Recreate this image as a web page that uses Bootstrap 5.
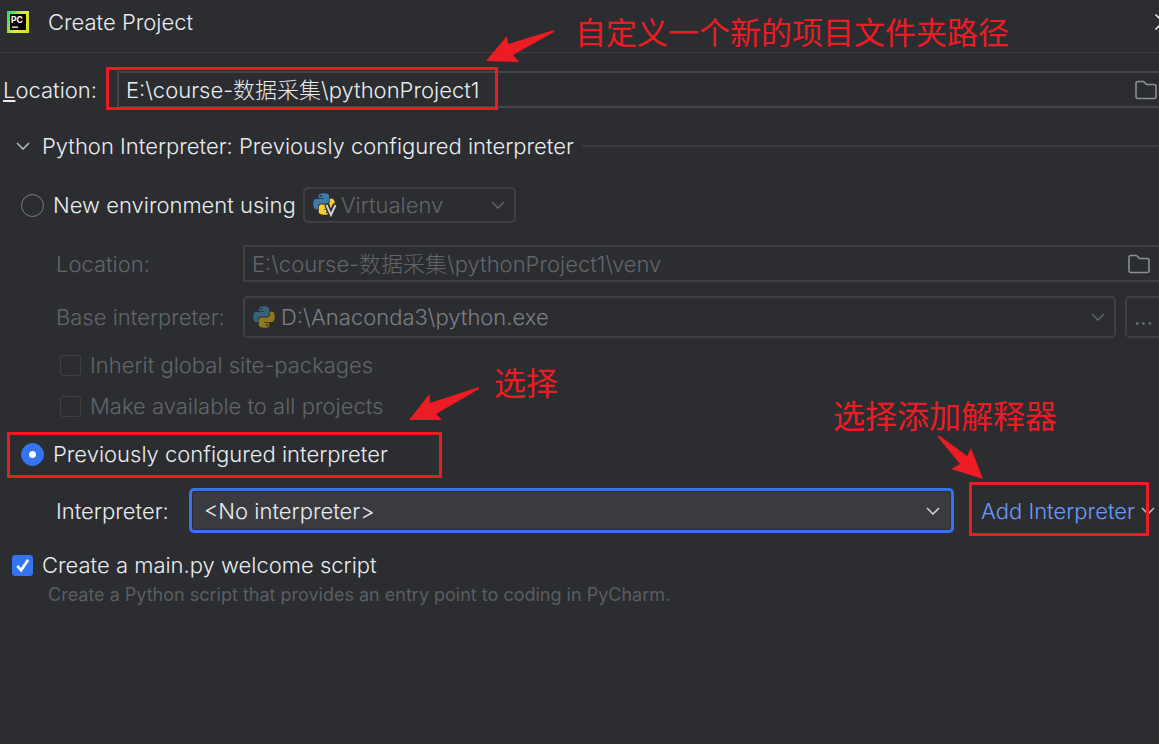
<!DOCTYPE html>
<html lang="en" data-bs-theme="dark">
<head>
<meta charset="utf-8">
<meta name="viewport" content="width=device-width, initial-scale=1">
<title>Create Project</title>
<link href="https://cdn.jsdelivr.net/npm/bootstrap@5.3.0/dist/css/bootstrap.min.css" rel="stylesheet">
<style>
  :root {
    --ui-bg: #2b2d30;
    --ui-text: #eaecf0;
    --ui-muted: #62656b;
    --ui-line: #43454a;
    --ui-blue: #3574f0;
    --note-red: #ed1c24;
  }
  body {
    background: var(--ui-bg);
    color: var(--ui-text);
    font-family: Inter, "Noto Sans CJK SC", sans-serif;
    font-size: 22px;
    font-weight: 300;
    line-height: 32px;
    overflow-x: hidden;
  }
  .title-bar { height: 53px; padding: 0 0 8px 7px; border-bottom: 1px solid #3c3e42; overflow: hidden; }
  .title-bar h1 { font-size: 22px; line-height: 32px; font-weight: 300; margin-left: 19px; color: var(--ui-text); }
  .close-btn { width: 16px; height: 16px; margin-right: -12px; line-height: 0; color: #fff; }
  .mnemonic { text-decoration: underline; text-decoration-thickness: 2px; text-underline-offset: 2px; text-decoration-skip-ink: none; }

  .form-control, .form-select {
    background-color: transparent;
    border: 2px solid var(--ui-line);
    color: var(--ui-text);
    font-size: 22px;
    font-weight: 300;
    line-height: 32px;
    padding: 0 7px;
  }
  .form-control { border-radius: 0; border-right: 0; padding-right: 48px; padding-bottom: 4px; }
  .form-control:disabled, .form-select:disabled { background-color: transparent; color: var(--ui-muted); opacity: 1; border-color: #3f4145; }
  .form-select {
    border-radius: 5px;
    background-image: url("data:image/svg+xml,%3Csvg xmlns='http://www.w3.org/2000/svg' viewBox='0 0 14 8'%3E%3Cpath d='M1 1l6 6 6-6' fill='none' stroke='%235f6268' stroke-width='1.6'/%3E%3C/svg%3E");
    background-size: 14px 8px;
    background-position: right 9px center;
  }
  .form-select.with-icon { padding-left: 36px; }
  .select-icon { position: absolute; left: 10px; top: 50%; transform: translateY(-50%); }
  .browse-btn { position: absolute; top: 50%; transform: translateY(-50%); line-height: 0; color: #8b8e94; }
  .h-field { height: 37px; }
  .h-combo { height: 42px; }
  .h-small { height: 36px; }
  .dim { color: var(--ui-muted); }

  .form-select.active-combo {
    height: 45px;
    background-color: #393b40;
    background-image: url("data:image/svg+xml,%3Csvg xmlns='http://www.w3.org/2000/svg' viewBox='0 0 14 8'%3E%3Cpath d='M1 1l6 6 6-6' fill='none' stroke='%23ced0d6' stroke-width='1.6'/%3E%3C/svg%3E");
    background-position: right 11px center;
    border: 3px solid var(--ui-blue);
    box-shadow: inset 0 0 0 1px var(--ui-bg);
    padding-left: 12px;
  }

  .form-check-input { margin: 0; background-color: transparent; border: 1px solid #7b7f86; flex: none; }
  .form-check-input[type=radio] { width: 23px; height: 23px; }
  .form-check-input[type=checkbox] { width: 21px; height: 21px; border-radius: 3px; }
  .form-check-input:checked { background-color: var(--ui-blue); border-color: var(--ui-blue); }
  .form-check-input[type=radio]:checked { background-image: radial-gradient(circle, #fff 3px, transparent 4px); }
  .form-check-input[type=checkbox]:checked { background-size: 100%; background-image: url("data:image/svg+xml,%3Csvg xmlns='http://www.w3.org/2000/svg' viewBox='0 0 20 20'%3E%3Cpath d='M4.500 10.500L8.500 15 16 4' fill='none' stroke='%23fff' stroke-width='2.8'/%3E%3C/svg%3E"); }
  .form-check-input:disabled { border-color: var(--ui-line); opacity: .8; }
  .form-check-input:disabled ~ label { opacity: 1; }

  .col-inner { width: 187px; flex: none; }
  .col-interp { width: 133px; flex: none; }
  .more-btn { width: 43px; margin-right: -9px; border: 2px solid #3f4145; border-radius: 5px; color: var(--ui-muted); padding: 0 7px; text-align: left; font-size: 22px; line-height: 32px; }
  .add-area { width: 205px; padding-left: 27px; flex: none; }
  .add-link { color: #6b9bfa; text-decoration: none; }
  .hint { font-size: 18px; line-height: 24px; font-weight: 400; color: #5a5d63; padding-left: 48px; margin-top: 2px; }

  /* tutorial annotations drawn over the dialog */
  .note-frame { position: absolute; border: 3px solid var(--note-red); pointer-events: none; z-index: 3; }
  .note-text { position: absolute; color: var(--note-red); font-family: "Noto Sans CJK SC", sans-serif; font-size: 32px; font-weight: 400; line-height: 36px; white-space: nowrap; z-index: 3; }
  .note-text.long { font-size: 31px; }
  .note-arrow { position: absolute; fill: var(--note-red); z-index: 3; }
</style>
</head>
<body>
<svg class="d-none" aria-hidden="true">
  <symbol id="folder" viewBox="0 0 22 20"><path d="M1 16.500V3.500Q1 1.500 3 1.500H8.500L11.500 4.500H19Q21 4.500 21 6.500V16.500Q21 18.500 19 18.500H3Q1 18.500 1 16.500Z" fill="none" stroke="currentColor" stroke-width="1.600"/></symbol>
  <symbol id="py-top" viewBox="0 0 110 110"><path d="M54 1C27 1 29 13 29 13v13h26v4H18S1 28 1 55s15 26 15 26h10V68s-1-15 15-15h26s14 0 14-14V16S83 1 54 1zM40 9a5 5 0 1 1 0 10 5 5 0 0 1 0-10z"/></symbol>
  <symbol id="py-bottom" viewBox="0 0 110 110"><path d="M56 109c27 0 25-12 25-12V84H55v-4h37s17 2 17-25-15-26-15-26H84v13s1 15-15 15H43s-14 0-14 14v23s-2 15 27 15zm14-8a5 5 0 1 1 0-10 5 5 0 0 1 0 10z"/></symbol>
</svg>

<header class="title-bar d-flex align-items-center">
  <svg width="22" height="22" viewBox="0 0 22 22" aria-hidden="true">
    <defs><linearGradient id="pc" x1="0" y1="0" x2="1" y2=".5"><stop offset="0" stop-color="#21d789"/><stop offset=".3" stop-color="#6be33c"/><stop offset=".65" stop-color="#e6ef2a"/><stop offset="1" stop-color="#d6e22c"/></linearGradient></defs>
    <rect width="22" height="22" fill="url(#pc)"/><rect x="3" y="3" width="16" height="16" fill="#050505"/>
    <text x="4" y="11.500" font-family="Inter, sans-serif" font-size="8.500" font-weight="700" fill="#fff">PC</text>
    <rect x="5" y="15.500" width="6" height="1.300" fill="#fff"/>
  </svg>
  <h1 class="mb-0">Create Project</h1>
  <button type="button" class="close-btn btn p-0 border-0 ms-auto" aria-label="Close">
    <svg width="16" height="16" viewBox="0 0 16 16" stroke="currentColor" stroke-width="1.400"><path d="M.5.5l15 15M15.500.5l-15 15"/></svg>
  </button>
</header>

<main class="pb-4">
  <form>
    <div class="d-flex align-items-center position-relative" style="margin-top:18px">
      <label for="location" class="flex-shrink-0" style="width:117px;padding-left:3px"><span class="mnemonic">L</span>ocation:</label>
      <div class="flex-grow-1 position-relative">
        <input id="location" type="text" class="form-control h-field" value="E:\course-数据采集\pythonProject1">
        <button type="button" class="browse-btn btn p-0 border-0" style="right:2px" aria-label="Browse project location"><svg width="22" height="20"><use href="#folder"/></svg></button>
      </div>
      <div class="note-frame" style="left:106px;top:-4px;width:392px;height:43px"></div>
      <svg class="note-arrow" style="left:486px;top:-42px" width="69" height="34"><path d="M68 1L22 15 21 7 0 32 33 33 27 26 68 3Z"/></svg>
      <div class="note-text long" style="left:575px;top:-58px" lang="zh">自定义一个新的项目文件夹路径</div>
    </div>

    <div class="d-flex align-items-center" style="margin-top:22px">
      <button type="button" class="btn p-0 border-0 d-flex" style="margin-left:16px;margin-right:12px" aria-label="Collapse section"><svg width="14" height="8" viewBox="0 0 14 8"><path d="M1 1l6 6 6-6" fill="none" stroke="#b4b8bf" stroke-width="1.600"/></svg></button>
      <span>Python Interpreter: Previously configured interpreter</span>
      <div class="flex-grow-1" style="height:2px;margin-left:8px;background:#393b40"></div>
    </div>

    <div class="d-flex align-items-center" style="margin-top:25px;padding-left:21px">
      <input class="form-check-input" type="radio" name="env" id="env-new">
      <label for="env-new" style="margin-left:9px;margin-right:7px">New environment using</label>
      <div class="position-relative" style="width:213px">
        <select class="form-select with-icon h-small py-0" disabled aria-label="Environment tool"><option>Virtualenv</option></select>
        <svg class="select-icon" width="24" height="24" viewBox="0 0 24 24" aria-hidden="true">
          <use href="#py-top" width="22" height="22" fill="#3f7cac"/><use href="#py-bottom" width="22" height="22" fill="#fbd12f"/>
          <path d="M13.500 11l4.500 11 4.500-11" fill="none" stroke="#2b2d30" stroke-width="5"/><path d="M13.500 12l4.500 10 4.500-10" fill="none" stroke="#ced0d6" stroke-width="2"/>
        </svg>
      </div>
    </div>

    <div class="dim" style="padding-left:56px">
      <div class="d-flex align-items-center" style="margin-top:22px">
        <label for="venv-location" class="col-inner">Location:</label>
        <div class="flex-grow-1 position-relative">
          <input id="venv-location" type="text" class="form-control h-field" value="E:\course-数据采集\pythonProject1\venv" disabled>
          <button type="button" class="browse-btn btn p-0 border-0" style="right:9px" aria-label="Browse environment location"><svg width="22" height="20"><use href="#folder"/></svg></button>
        </div>
      </div>
      <div class="d-flex align-items-center overflow-hidden" style="margin-top:14px">
        <label for="base-interpreter" class="col-inner">Base interpreter:</label>
        <div class="flex-grow-1 position-relative">
          <select id="base-interpreter" class="form-select with-icon h-combo" style="color:#7b7f86" disabled><option>D:\Anaconda3\python.exe</option></select>
          <svg class="select-icon" width="22" height="22" viewBox="0 0 22 22" aria-hidden="true"><use href="#py-top" width="22" height="22" fill="#356379"/><use href="#py-bottom" width="22" height="22" fill="#91771b"/></svg>
        </div>
        <button type="button" class="more-btn btn h-combo flex-shrink-0" style="margin-left:9px" aria-label="Choose base interpreter">...</button>
      </div>
      <div class="d-flex align-items-center" style="margin-top:11px;padding-left:4px">
        <input class="form-check-input" type="checkbox" id="inherit" disabled>
        <label for="inherit" style="margin-left:9px">Inherit global site-packages</label>
      </div>
      <div class="d-flex align-items-center" style="margin-top:9px;padding-left:4px">
        <input class="form-check-input" type="checkbox" id="available" disabled>
        <label for="available" style="margin-left:9px">Make available to all projects</label>
      </div>
    </div>

    <div class="d-flex align-items-center position-relative" style="margin-top:16px;padding-left:21px">
      <input class="form-check-input" type="radio" name="env" id="env-prev" checked>
      <label for="env-prev" style="margin-left:9px">Previously configured interpreter</label>
      <div class="note-frame" style="left:7px;top:-6px;width:435px;height:46px"></div>
      <svg class="note-arrow" style="left:409px;top:-52px" width="71" height="36"><path d="M70 1L21 17 20.500 8 0 34 33 34 27 28 70 3Z"/></svg>
      <div class="note-text" style="left:494px;top:-75px" lang="zh">选择</div>
    </div>

    <div class="d-flex align-items-center position-relative" style="margin-top:18px;padding-left:56px">
      <label for="interpreter" class="col-interp">Interpreter:</label>
      <select id="interpreter" class="form-select active-combo flex-grow-1 w-auto"><option>&lt;No interpreter&gt;</option></select>
      <div class="add-area d-flex align-items-center position-relative align-self-stretch">
        <a href="#" class="add-link text-nowrap">Add Interpreter</a>
        <svg class="flex-shrink-0" style="margin-left:6px" width="14" height="8" viewBox="0 0 14 8" aria-hidden="true"><path d="M1 1l6 6 6-6" fill="none" stroke="#b4b8bf" stroke-width="1.600"/></svg>
        <div class="note-frame" style="left:15px;top:-6px;right:10px;bottom:-3px"></div>
        <svg class="note-arrow" style="left:-17px;top:-52px" width="47" height="44"><path d="M0 0H3L30 20 34 12 46 43 14 33 23 28Z"/></svg>
        <div class="note-text" style="right:102px;top:-92px" lang="zh">选择添加解释器</div>
      </div>
    </div>

    <div class="d-flex align-items-center" style="margin-top:16px;padding-left:12px">
      <input class="form-check-input" type="checkbox" id="welcome" checked>
      <label for="welcome" style="margin-left:9px">Create a main.py welcome script</label>
    </div>
    <p class="hint mb-0">Create a Python script that provides an entry point to coding in PyCharm.</p>
  </form>
</main>
<script src="https://cdn.jsdelivr.net/npm/bootstrap@5.3.0/dist/js/bootstrap.bundle.min.js"></script>
</body>
</html>
